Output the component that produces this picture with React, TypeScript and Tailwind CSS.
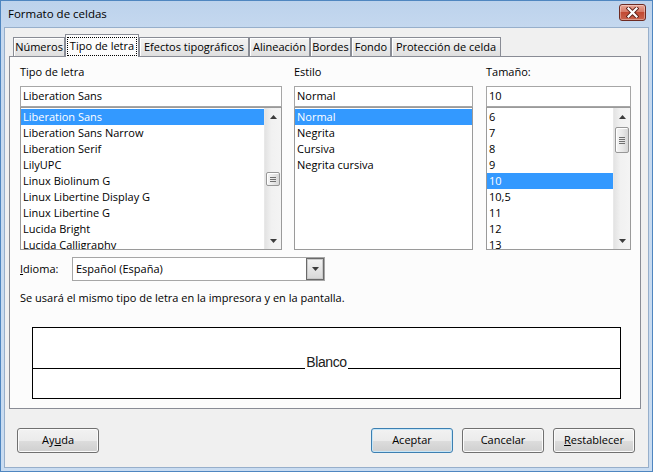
import React from "react";

type Tab = { label: string; width: string; active?: boolean };

const TABS: Tab[] = [
  { label: "Números", width: "w-[52px]" },
  { label: "Tipo de letra", width: "w-[74px]", active: true },
  { label: "Efectos tipográficos", width: "w-[110px]" },
  { label: "Alineación", width: "w-[61px]" },
  { label: "Bordes", width: "w-[41px]" },
  { label: "Fondo", width: "w-[40px]" },
  { label: "Protección de celda", width: "w-[110px]" },
];

const FONTS = [
  "Liberation Sans",
  "Liberation Sans Narrow",
  "Liberation Serif",
  "LilyUPC",
  "Linux Biolinum G",
  "Linux Libertine Display G",
  "Linux Libertine G",
  "Lucida Bright",
  "Lucida Calligraphy",
];
const STYLES = ["Normal", "Negrita", "Cursiva", "Negrita cursiva"];
const SIZES = ["6", "7", "8", "9", "10", "10,5", "11", "12", "13"];

function Arrow({ up }: { up?: boolean }) {
  return (
    <svg width="7" height="4" viewBox="0 0 7 4">
      {up ? <path d="M3.5 0 L7 4 L0 4 Z" fill="#3c3c3c" /> : <path d="M0 0 L7 0 L3.5 4 Z" fill="#3c3c3c" />}
    </svg>
  );
}

function ScrollBar({ offset, thumb, grips }: { offset: string; thumb: string; grips: number }) {
  return (
    <div className="w-[17px] flex flex-col bg-[linear-gradient(90deg,#e3e3e3,#f1f1f1_40%,#f4f4f4)] border-l border-[#e8e8e8]">
      <div className="h-[17px] flex items-center justify-center">
        <Arrow up />
      </div>
      <div className={offset} />
      <div
        className={`${thumb} mx-px rounded-[2px] border border-[#979797] bg-[linear-gradient(90deg,#f6f6f6,#e9e9e9_50%,#d6d6d6)] shadow-[inset_1px_1px_0_#fff] flex flex-col items-center justify-center gap-px`}
      >
        {Array.from({ length: grips }).map((_, i) => (
          <div key={i} className="w-[6px] h-px bg-[#707070]" />
        ))}
      </div>
      <div className="flex-1" />
      <div className="h-[17px] flex items-center justify-center">
        <Arrow />
      </div>
    </div>
  );
}

function ListBox({
  items,
  selected,
  scroll,
}: {
  items: string[];
  selected: number;
  scroll?: React.ReactNode;
}) {
  return (
    <div className="h-[143px] border border-[#9a9a9a] bg-white flex overflow-hidden">
      <div className="flex-1 pt-px overflow-hidden">
        {items.map((it, i) => (
          <div
            key={it}
            className={`h-4 leading-4 pl-[2px] whitespace-nowrap ${i === selected ? "bg-[#3399ff] text-white" : ""}`}
          >
            {it}
          </div>
        ))}
      </div>
      {scroll}
    </div>
  );
}

function Field({ label, value, width, className = "", scroll, items, selected }: {
  label: string;
  value: string;
  width: string;
  className?: string;
  scroll?: React.ReactNode;
  items: string[];
  selected: number;
}) {
  return (
    <div className={`flex flex-col ${width} ${className}`}>
      <div className="h-4 leading-4">{label}</div>
      <div className="mt-[6px] h-[21px] border border-[#a6a6a6] bg-white flex items-center pl-[2px]">{value}</div>
      <ListBox items={items} selected={selected} scroll={scroll} />
    </div>
  );
}

function Button({ children, primary, className = "" }: { children: React.ReactNode; primary?: boolean; className?: string }) {
  return (
    <button
      className={`h-[25px] w-[82px] rounded-[3px] border flex items-center justify-center bg-[linear-gradient(#f2f2f2,#ebebeb_50%,#dddddd_50%,#cfcfcf)] ${
        primary
          ? "border-[#3c7fb1] shadow-[inset_0_0_0_1px_#c6e6f8]"
          : "border-[#707070] shadow-[inset_0_0_0_1px_#fbfbfb]"
      } ${className}`}
    >
      {children}
    </button>
  );
}

export default function App() {
  return (
    <div className="w-[653px] h-[472px] flex flex-col border border-[#4f86c0] bg-[linear-gradient(#bcd2ec,#c6d9ef_30px,#c9dcf1)] font-['Open_Sans',sans-serif] text-[11px] text-black overflow-hidden">
      {/* title bar */}
      <div className="h-[26px] shrink-0 flex items-center justify-between pl-[7px] pr-[6px]">
        <span className="text-[11.5px]">Formato de celdas</span>
        <div className="w-[27px] h-[17px] mb-[4px] rounded-[3px] border border-[#6e2b22] bg-[linear-gradient(#e7a595,#d67b68_45%,#c24a33_50%,#c9634d)] shadow-[inset_0_0_0_1px_rgba(255,255,255,0.35)] flex items-center justify-center">
          <svg width="13" height="11" viewBox="0 0 13 11">
            <path d="M2.5 1.5 L10.5 9.5 M10.5 1.5 L2.5 9.5" stroke="#5b2018" strokeWidth="4" strokeLinecap="square" />
            <path d="M2.5 1.5 L10.5 9.5 M10.5 1.5 L2.5 9.5" stroke="#ffffff" strokeWidth="2.2" strokeLinecap="square" />
          </svg>
        </div>
      </div>

      {/* client area */}
      <div className="flex-1 mx-[3px] mb-[3px] border border-[#97afcb] bg-[#f0f0f0] flex flex-col pl-[4px] pr-[7px] pt-[6px]">
        {/* tabs */}
        <div className="h-[22px] flex items-end pl-[4px]">
          {TABS.map((t) =>
            t.active ? (
              <div
                key={t.label}
                className={`${t.width} relative z-10 h-[23px] -mb-px border border-b-0 border-[#898c95] bg-[#fcfcfc] flex items-center justify-center`}
              >
                <span className="h-[19px] px-[2px] border border-dotted border-black flex items-center">{t.label}</span>
              </div>
            ) : (
              <div
                key={t.label}
                className={`${t.width} h-[19px] border border-b-0 border-[#898c95] bg-[linear-gradient(#f3f3f3,#ebebeb_50%,#dedede)] shadow-[inset_1px_1px_0_#fff] flex items-center justify-center whitespace-nowrap`}
              >
                {t.label}
              </div>
            )
          )}
        </div>

        {/* tab page */}
        <div className="h-[353px] border border-[#898c95] bg-[#fcfcfc] pl-[10px] pr-[9px] pt-[7px] flex flex-col">
          <div className="flex">
            <Field
              label="Tipo de letra"
              value="Liberation Sans"
              width="w-[262px]"
              items={FONTS}
              selected={0}
              scroll={<ScrollBar offset="h-[47px]" thumb="h-[14px]" grips={3} />}
            />
            <Field label="Estilo" value="Normal" width="w-[179px]" className="ml-[12px]" items={STYLES} selected={0} />
            <Field
              label="Tamaño:"
              value="10"
              width="w-[145px]"
              className="ml-[13px]"
              items={SIZES}
              selected={4}
              scroll={<ScrollBar offset="h-[2px]" thumb="h-[26px]" grips={4} />}
            />
          </div>

          <div className="mt-[7px] h-[24px] flex items-center">
            <span className="w-[52px]">
              <span className="underline">I</span>dioma:
            </span>
            <div className="w-[253px] h-[24px] border border-[#a6a6a6] bg-white flex items-center">
              <span className="flex-1 pl-[3px]">Español (España)</span>
              <div className="w-[18px] h-[22px] border border-[#6a6a6a] shadow-[inset_0_0_0_1px_#c9c9c9] bg-[linear-gradient(#f4f4f4,#e6e6e6_50%,#d8d8d8)] flex items-center justify-center">
                <Arrow />
              </div>
            </div>
          </div>

          <div className="mt-[9px] h-4 leading-4">Se usará el mismo tipo de letra en la impresora y en la pantalla.</div>

          <div className="mt-[21px] ml-[12px] mr-[10px] h-[72px] border border-black bg-white flex flex-col">
            <div className="h-[41px] flex items-end">
              <div className="flex-1 h-px bg-black" />
              <span className="px-px leading-[13px] text-[14px] tracking-[-0.4px] text-[#202020] font-['Liberation_Sans',sans-serif]">
                Blanco
              </span>
              <div className="flex-1 h-px bg-black" />
            </div>
            <div className="flex-1" />
          </div>
        </div>

        {/* buttons */}
        <div className="mt-[19px] flex items-center ml-[8px] mr-[6px]">
          <Button>
            Ay<span className="underline">u</span>da
          </Button>
          <div className="flex-1" />
          <Button primary>Aceptar</Button>
          <Button className="ml-[9px]">Cancelar</Button>
          <Button className="ml-[9px]">
            <span className="underline">R</span>establecer
          </Button>
        </div>
      </div>
    </div>
  );
}
